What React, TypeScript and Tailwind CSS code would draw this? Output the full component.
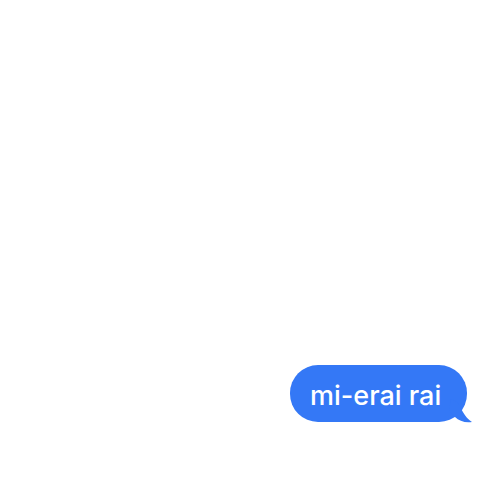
export default function App() {
  return (
    <div className="flex h-[500px] w-[500px] flex-col items-end justify-end bg-white pb-[78px] pr-[33px]">
      <div className="relative">
        <div className="flex h-[57px] w-[177px] items-center rounded-[28px] bg-[#3478f6] pl-[20px] pt-[3px] font-['Inter',sans-serif] text-[27px] font-medium leading-none text-white">
          mi-erai rai
        </div>
        {/* tail */}
        <svg className="absolute -right-[6px] bottom-[-1px]" width="24" height="24" viewBox="0 0 24 24">
          <path d="M2 0 C 12 2 12 16 23 23 C 16 24 10 22 6 18 L 0 12 Z" fill="#3478f6" />
        </svg>
      </div>
    </div>
  );
}
